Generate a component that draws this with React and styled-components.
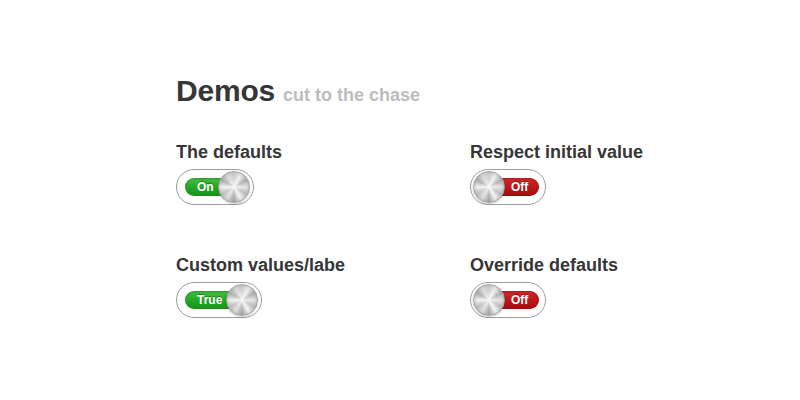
import React from "react"
import styled, { createGlobalStyle } from "styled-components"

const GlobalStyle = createGlobalStyle`
  body {
    margin: 0;
    background: #fff;
    font-family: "Liberation Sans", Arial, sans-serif;
  }
`

const Page = styled.div`
  padding: 73px 0 0 176px;
`

const Title = styled.h1`
  margin: 0 0 32px;
  height: 36px;
  font-size: 30px;
  line-height: 36px;
  font-weight: bold;
  color: #363636;
  letter-spacing: -0.2px;
`

const Subtitle = styled.small`
  margin-left: 8px;
  font-size: 18px;
  line-height: 1;
  color: #bcbcbc;
  letter-spacing: 0;
`

const Grid = styled.div`
  display: grid;
  grid-template-columns: 294px 294px;
  row-gap: 49px;
`

const Demo = styled.div`
  display: flex;
  flex-direction: column;
  align-items: flex-start;
`

const Label = styled.h3`
  margin: 0 0 6px;
  font-size: 18px;
  line-height: 22px;
  font-weight: bold;
  color: #363636;
`

const Outer = styled.div`
  display: inline-flex;
  align-items: center;
  height: 34px;
  padding: ${props => props.$on ? "0 3px 0 8px" : "0 6px 0 2px"};
  border: 1px solid #9c9c9c;
  border-radius: 18px;
  background: #fff;
  cursor: pointer;
`

const Track = styled.div`
  height: 18px;
  padding: ${props => props.$on ? "0 20px 0 12px" : "0 11px 0 22px"};
  border-radius: 9px;
  background: ${props => props.$on
    ? "linear-gradient(#44c144, #23a523 55%, #1a931a)"
    : "linear-gradient(#d22a2a, #bb1616 55%, #a20f0f)"};
  box-shadow: inset 0 1px 2px rgba(0, 0, 0, 0.25);
  font-size: 12px;
  line-height: 18px;
  font-weight: bold;
  color: #fff;
  text-shadow: 0 -1px 0 rgba(0, 0, 0, 0.35);
`

const Knob = styled.div`
  position: relative;
  z-index: 1;
  flex: none;
  width: 30px;
  height: 30px;
  margin: ${props => props.$on ? "0 0 0 -16px" : "0 -16px 0 0"};
  border: 1px solid #a3a3a3;
  border-radius: 50%;
  background:
    radial-gradient(circle, rgba(255, 255, 255, 0.95) 0, rgba(255, 255, 255, 0.45) 15%, rgba(255, 255, 255, 0) 42%),
    radial-gradient(circle, rgba(0, 0, 0, 0) 50%, rgba(0, 0, 0, 0.22) 100%),
    conic-gradient(#d0d0d0, #f2f2f2, #b4b4b4, #e8e8e8, #c0c0c0, #f8f8f8, #adadad, #e2e2e2, #c4c4c4, #f4f4f4, #b2b2b2, #dedede, #d0d0d0);
  box-shadow: 0 1px 2px rgba(0, 0, 0, 0.2);
`

const Switch = ({ on, text }) => (
  <Outer $on={ on }>
    { on
      ? <><Track $on>{ text }</Track><Knob $on /></>
      : <><Knob /><Track>{ text }</Track></> }
  </Outer>
)

const demos = [
  { label: "The defaults", on: true, text: "On" },
  { label: "Respect initial value", on: false, text: "Off" },
  { label: "Custom values/labe", on: true, text: "True" },
  { label: "Override defaults", on: false, text: "Off" }
]

export default function App() {
  return (
    <Page>
      <GlobalStyle />
      <Title>Demos<Subtitle>cut to the chase</Subtitle></Title>
      <Grid>
        { demos.map(demo => (
          <Demo key={ demo.label }>
            <Label>{ demo.label }</Label>
            <Switch on={ demo.on } text={ demo.text } />
          </Demo>
        )) }
      </Grid>
    </Page>
  )
}
